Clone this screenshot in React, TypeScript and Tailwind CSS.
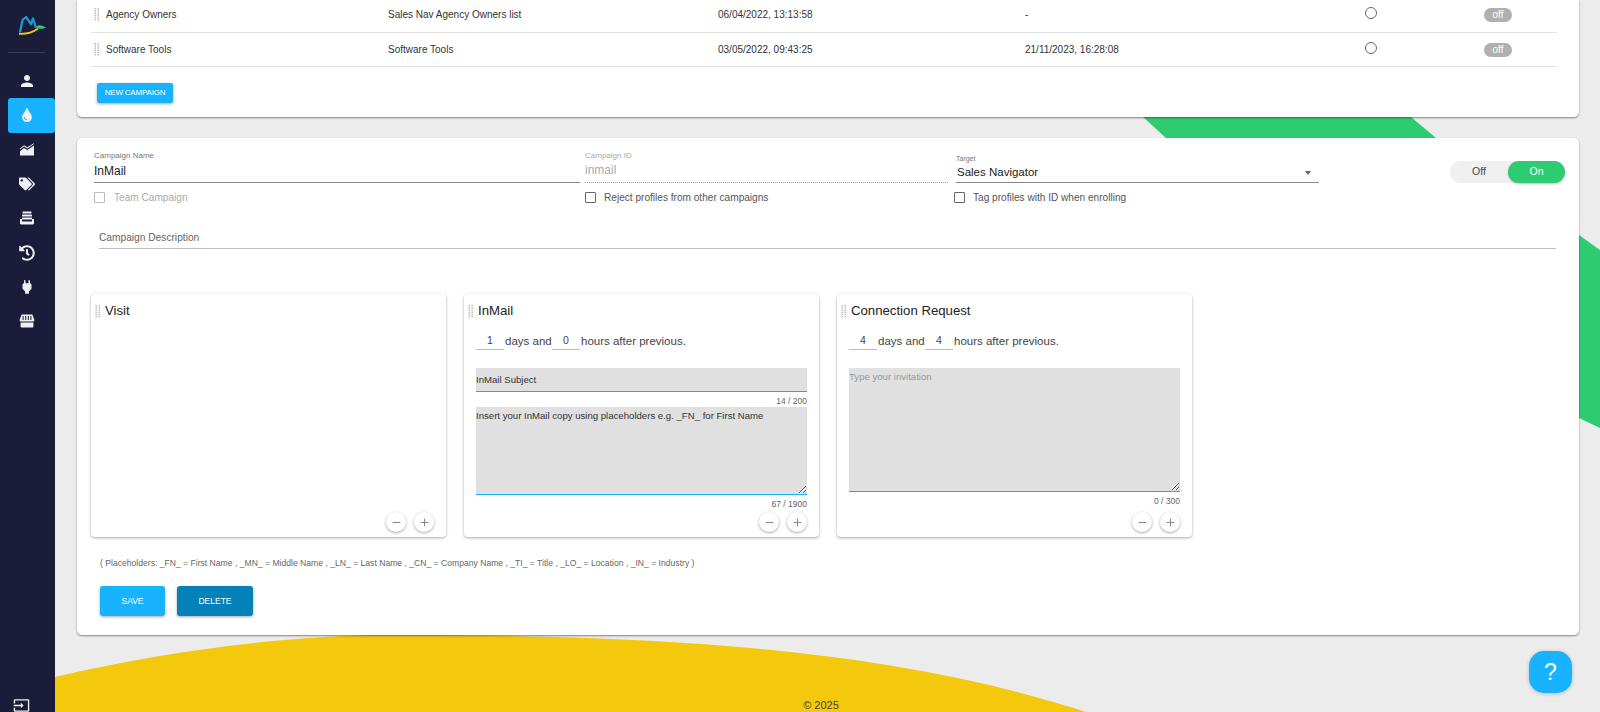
import React from "react";
import { MdPerson, MdPower, MdInput, MdAdd, MdRemove } from "react-icons/md";
import { FaTint, FaTags, FaHistory } from "react-icons/fa";

const Handle = () => (
  <svg width="6" height="13" viewBox="0 0 6 13" className="shrink-0">
    {[0, 1, 2, 3, 4, 5].map((r) => (
      <g key={r} fill="#b5b5b5">
        <rect x="0.5" y={r * 2.2} width="1.4" height="1.4" />
        <rect x="3.5" y={r * 2.2} width="1.4" height="1.4" />
      </g>
    ))}
  </svg>
);

const ChartIcon = () => (
  <svg width="16" height="16" viewBox="0 0 16 16" fill="#eef0f4">
    <path d="M1 13.500V9.200l4-3.200 3.500 2L15 3.600v9.900z" />
    <path d="M1 7.600l4-3.200 3.500 2 6.500-4.400v-.8L8.400 5.200 5 3.200 1 6.400z" />
  </svg>
);
const StackIcon = () => (
  <svg width="16" height="16" viewBox="0 0 16 16" fill="#eef0f4">
    <rect x="3.500" y="1.500" width="9" height="2" rx="0.4" />
    <rect x="3" y="4.600" width="10" height="2" rx="0.4" />
    <path d="M1 9h2v2.400h10V9h2v4.200c0 .7-.5 1.200-1.200 1.200H2.200c-.7 0-1.200-.5-1.200-1.200z" />
    <rect x="3" y="7.600" width="10" height="2" rx="0.4" />
  </svg>
);
const StoreIcon = () => (
  <svg width="16" height="16" viewBox="0 0 16 16" fill="#eef0f4">
    <path d="M2.600 1.500h10.800L15.400 7c0 1-.7 1.500-1.500 1.500H2.100C1.300 8.500.6 8 .6 7z" />
    <g fill="#1a1c3a">
      <rect x="3.600" y="3" width="1" height="4" />
      <rect x="6.200" y="3" width="1" height="4" />
      <rect x="8.800" y="3" width="1" height="4" />
      <rect x="11.400" y="3" width="1" height="4" />
    </g>
    <path d="M1.600 9.500h12.800v4c0 .7-.5 1.100-1.100 1.100H2.700c-.6 0-1.100-.4-1.100-1.100z" />
  </svg>
);

const Logo = () => (
  <svg width="30" height="22" viewBox="17 14 30 22" fill="none">
    <path d="M20 32.500 L22.500 20 L26 17 L31 24 L33 18.500 L36 28" stroke="#159ad8" strokeWidth="2.300" strokeLinejoin="round" />
    <path d="M19 33.800 C26 34.300 32 32.800 38 28.800" stroke="#f2c80f" strokeWidth="1.900" />
    <path d="M36 27 C38 24.500 41 25 46 27.500 C42 29.300 39 29.500 36 27z" fill="#2ecc71" />
  </svg>
);

const nav = [
  <MdPerson size={18} color="#eef0f4" className="-ml-px" />,
  <FaTint size={14} color="#eef0f4" className="ml-px" />,
  <ChartIcon />,
  <FaTags size={16} color="#eef0f4" />,
  <StackIcon />,
  <FaHistory size={16} color="#eef0f4" />,
  <MdPower size={18} color="#eef0f4" className="-ml-px" />,
  <StoreIcon />,
];

const Sidebar = () => (
  <aside className="relative z-10 flex h-full w-[55px] shrink-0 flex-col bg-[#1a1c3a]">
    <div className="flex h-[52px] items-start pl-[17px] pt-[14px]">
      <Logo />
    </div>
    <div className="ml-2 h-px w-[37px] bg-[#3b3d58]" />
    <nav className="mt-[11px] flex flex-col pl-2">
      {nav.map((icon, i) => (
        <div
          key={i}
          className={
            "flex h-[34.300px] items-center pl-[11px] " +
            (i === 1 ? "rounded-[3px] bg-[#19b2ff]" : "")
          }
        >
          {icon}
        </div>
      ))}
    </nav>
    <div className="mt-auto pl-[13px] leading-none">
      <MdInput size={17} color="#eef0f4" className="-mb-[2px]" />
    </div>
  </aside>
);

const rows = [
  { h: "h-[33px] pb-[3px]", name: "Agency Owners", list: "Sales Nav Agency Owners list", a: "06/04/2022, 13:13:58", b: "-" },
  { h: "h-[34px]", name: "Software Tools", list: "Software Tools", a: "03/05/2022, 09:43:25", b: "21/11/2023, 16:28:08" },
];

const TopCard = () => (
  <section className="h-[117px] rounded-b-[5px] bg-white pl-[14px] pr-[22px] shadow-[0_1px_2px_rgba(0,0,0,0.45)]">
    {rows.map((r) => (
      <div key={r.name} className={r.h + " flex items-center border-b border-[#e2e2e2] text-[10px] text-[#333]"}>
        <div className="flex w-[297px] items-center gap-[6px] pl-[3px] text-[10px]">
          <Handle />
          <span>{r.name}</span>
        </div>
        <div className="w-[330px]">{r.list}</div>
        <div className="w-[307px]">{r.a}</div>
        <div className="w-[340px]">{r.b}</div>
        <div className="-mt-[3px] h-[12px] w-[12px] rounded-full border border-[#666]" />
        <div className="ml-[107px] flex h-[14px] w-[28px] items-center justify-center rounded-full bg-[#b0b0b0] text-[10px] text-white">
          off
        </div>
      </div>
    ))}
    <button className="ml-[6px] mt-[16px] flex h-5 w-[76px] items-center justify-center rounded-[2px] bg-[#19b2ff] text-[8px] tracking-tight text-white shadow-[0_1px_3px_rgba(0,0,0,0.35)]">
      NEW CAMPAIGN
    </button>
  </section>
);

const Check = ({ label, muted }: { label: string; muted?: boolean }) => (
  <label className={"flex h-4 items-center gap-2 text-[10.100px] " + (muted ? "text-[#aaa]" : "text-[#555]")}>
    <span className={"h-[11px] w-[11px] shrink-0 rounded-[1px] border " + (muted ? "border-[#bbb]" : "border-[#666]")} />
    <span className={"pt-px " + (muted ? "ml-[1px]" : "")}>{label}</span>
  </label>
);

const Stepper = () => (
  <div className="flex items-center justify-end gap-2 pr-[3px]">
    {[<MdRemove key="m" size={13} />, <MdAdd key="p" size={13} />].map((ic, i) => (
      <span key={i} className="flex h-5 w-5 items-center justify-center rounded-full bg-white text-[#888] shadow-[0_1px_3px_rgba(0,0,0,0.35)]">
        {ic}
      </span>
    ))}
  </div>
);

const Delay = ({ d, h }: { d: string; h: string }) => (
  <div className="mt-[15px] flex items-center pl-[12px] text-[11.500px] text-[#444]">
    <span className="h-4 w-7 border-b border-[#bbb] text-center text-[10.500px] leading-3 text-[#444]">{d}</span>
    <span className="ml-px w-[47px]">days and</span>
    <span className="h-4 w-7 border-b border-[#bbb] text-center text-[10.500px] leading-3 text-[#444]">{h}</span>
    <span className="ml-px">hours after previous.</span>
  </div>
);

const StepCard = ({ title, children }: { title: string; children?: React.ReactNode }) => (
  <div className="flex h-[243px] w-[355px] flex-col rounded-[4px] bg-white shadow-[0_1px_3px_rgba(0,0,0,0.35)]">
    <div className="flex items-center gap-[4px] pl-[4px] pt-[10px] text-[13.200px] leading-[14px] text-[#222]">
      <Handle />
      <span>{title}</span>
    </div>
    <div className="min-h-0 flex-1">{children}</div>
    <div className="pb-[5px] pr-[9px]">
      <Stepper />
    </div>
  </div>
);

export default function App() {
  return (
    <div className="relative flex h-[712px] w-[1600px] overflow-hidden bg-[#ececec] font-['Liberation_Sans',Arial,sans-serif]">
      <svg className="absolute inset-0" width="1600" height="712" viewBox="0 0 1600 712">
        <path d="M1143 117 L1411 117 L1436 138 L1166 138 Z" fill="#2ecc71" />
        <path d="M1579 235 L1600 250 L1600 428 L1579 418 Z" fill="#2ecc71" />
        <path d="M55 677 C180 648 300 635 390 635 C640 635 880 645 1086 712 L55 712 Z" fill="#f3c80d" />
      </svg>
      <Sidebar />
      <main className="relative flex min-w-0 flex-1 flex-col pl-[22px] pr-[21px]">
        <TopCard />
        <section className="mt-[21px] h-[497px] rounded-[5px] bg-white shadow-[0_1px_2px_rgba(0,0,0,0.45)]">
          <div className="flex pl-[17px] pr-[14px] pt-[13px]">
            <div className="w-[486px]">
              <div className="h-[10px] text-[8px] leading-[10px] text-[#777]">Campaign Name</div>
              <div className="h-[22px] border-b border-[#888] pt-[2px] text-[12px] leading-4 text-[#222]">InMail</div>
              <div className="mt-[6px]"><Check label="Team Campaign" muted /></div>
            </div>
            <div className="ml-[5px] w-[363px]">
              <div className="h-[10px] text-[8px] leading-[10px] text-[#aaa]">Campaign ID</div>
              <div className="h-[22px] border-b border-dotted border-[#999] pt-[1px] text-[12px] leading-4 text-[#aaa]">inmail</div>
              <div className="mt-[6px]"><Check label="Reject profiles from other campaigns" /></div>
            </div>
            <div className="ml-[8px] w-[363px]">
              <div className="h-[13px] pt-[3px] text-[7px] leading-[10px] text-[#777]">Target</div>
              <div className="flex h-[19px] items-center justify-between border-b border-[#888] pr-[8px] text-[11.500px] text-[#222]">
                <span className="pl-px">Sales Navigator</span>
                <span className="h-0 w-0 border-x-[3px] border-t-[4px] border-x-transparent border-t-[#666]" />
              </div>
              <div className="-ml-[2px] mt-[6px]"><Check label="Tag profiles with ID when enrolling" /></div>
            </div>
            <div className="ml-auto mt-[10px] flex h-[22px] w-[115px] items-center rounded-full bg-[#f0f0f0] text-[10.500px]">
              <span className="w-[58px] text-center text-[#444]">Off</span>
              <span className="flex h-[22px] w-[57px] items-center justify-center rounded-full bg-[#2ecc71] text-white shadow-[0_1px_2px_rgba(0,0,0,0.25)]">On</span>
            </div>
          </div>

          <div className="ml-[22px] mr-[23px] mt-[23px] h-[21px] border-b border-[#bdbdbd] text-[10.200px] leading-[19px] text-[#666]">
            Campaign Description
          </div>

          <div className="ml-[14px] mt-[45px] flex gap-[18px]">
            <StepCard title="Visit" />
            <StepCard title="InMail">
              <Delay d="1" h="0" />
              <div className="mx-3 mt-[18px] flex h-[24px] items-center border-b border-[#888] bg-[#e0e0e0] text-[9.600px] text-[#333]">InMail Subject</div>
              <div className="mx-3 h-[15px] pt-[4px] text-right text-[8.500px] leading-[10px] text-[#666]">14 / 200</div>
              <textarea
                readOnly
                value="Insert your InMail copy using placeholders e.g. _FN_ for First Name"
                className="mx-3 block h-[88px] w-[331px] border-b border-[#19b2ff] bg-[#e0e0e0] pt-[3px] text-[9.600px] leading-3 text-[#333] outline-none"
              />
              <div className="mx-3 mt-[3px] text-right text-[8.500px] leading-3 text-[#666]">67 / 1900</div>
            </StepCard>
            <StepCard title="Connection Request">
              <Delay d="4" h="4" />
              <textarea
                readOnly
                placeholder="Type your invitation"
                className="mx-3 mt-[18px] block h-[124px] w-[331px] border-b border-[#888] bg-[#e0e0e0] pt-[3px] text-[9.600px] leading-3 text-[#333] outline-none placeholder:text-[#999]"
              />
              <div className="mx-3 mt-[3px] text-right text-[8.500px] leading-3 text-[#666]">0 / 300</div>
            </StepCard>
          </div>

          <div className="ml-[23px] mt-[21px] text-[8.600px] leading-[10px] text-[#666]">
            ( Placeholders: _FN_ = First Name , _MN_ = Middle Name , _LN_ = Last Name , _CN_ = Company Name , _TI_ = Title , _LO_ = Location , _IN_ = Industry )
          </div>

          <div className="ml-[23px] mt-[18px] flex gap-3">
            <button className="h-[30px] w-[65px] rounded-[3px] bg-[#19b2ff] text-[8.500px] text-white shadow-[0_1px_3px_rgba(0,0,0,0.35)]">SAVE</button>
            <button className="h-[30px] w-[76px] rounded-[3px] bg-[#0282b9] text-[8.500px] text-white shadow-[0_1px_3px_rgba(0,0,0,0.35)]">DELETE</button>
          </div>
        </section>

        <div className="absolute bottom-0 left-0 right-0 pr-[13px] text-center text-[11px] leading-[14px] text-[#444]">© 2025</div>
      </main>
      <button className="absolute left-[1529px] top-[651px] flex h-[42px] w-[43px] items-center justify-center rounded-[15px] bg-[#19b2ff] text-[23px] font-light text-white shadow-[0_1px_4px_rgba(0,0,0,0.2)]">
        ?
      </button>
    </div>
  );
}
